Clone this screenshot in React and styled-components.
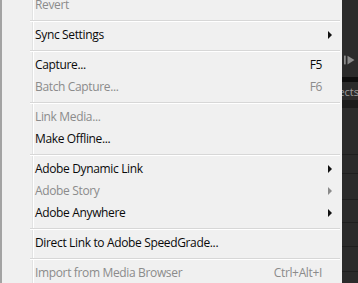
import React from "react";
import styled, { createGlobalStyle } from "styled-components";

const Global = createGlobalStyle`
  html, body { margin: 0; padding: 0; background: #2b2b2b; }
  body { font-family: "Open Sans", "Noto Sans", sans-serif; }
`;

const Page = styled.div`
  display: flex;
  width: 358px;
  height: 283px;
  overflow: hidden;
`;

const Menu = styled.div`
  flex: 0 0 342px;
  margin-top: -6px;
  display: flex;
  flex-direction: column;
  background:
    linear-gradient(to right, transparent 30px, #e2e3e3 30px, #e2e3e3 31px, #ffffff 31px, #ffffff 32px, transparent 32px),
    #f0f0f0;
  border-left: 2px solid #a3a3a3;
  box-sizing: border-box;
  font-size: 12px;
  letter-spacing: -0.35px;
`;

const Item = styled.div`
  display: flex;
  align-items: center;
  height: 22px;
  flex: 0 0 22px;
  padding-left: 33px;
  color: ${(p) => (p.$disabled ? "#8b8b8b" : "#0a0a0a")};
`;

const Label = styled.span`
  flex: 1;
  white-space: nowrap;
  line-height: 14px;
`;

const Shortcut = styled.span`
  white-space: nowrap;
  line-height: 14px;
`;

const ArrowCell = styled.span`
  flex: 0 0 20px;
  display: flex;
  align-items: center;
  padding-left: 6px;
  box-sizing: border-box;
`;

const Separator = styled.div`
  flex: 0 0 8px;
  margin-left: 28px;
  display: flex;
  align-items: center;
  &::after {
    content: "";
    flex: 1;
    height: 1px;
    background: #d7d7d7;
    box-shadow: 0 1px 0 #ffffff;
    margin-right: 2px;
  }
`;

const DarkStrip = styled.div`
  flex: 1;
  min-width: 0;
  display: flex;
  flex-direction: column;
  background: #2b2b2b;
  color: #9a9a9a;
  font-size: 12px;
  overflow: hidden;
`;

const Gap = styled.div`
  flex: 0 0 ${(p) => p.$h}px;
  background: ${(p) => p.$bg || "transparent"};
`;

const IconRow = styled.div`
  flex: 0 0 14px;
  display: flex;
  align-items: center;
  padding-left: 2px;
`;

const Tab = styled.div`
  flex: 0 0 18px;
  display: flex;
  align-items: center;
  justify-content: flex-end;
  white-space: nowrap;
  font-size: 11px;
  color: #9c9c9c;
  margin-right: -1px;
`;

const Row = styled.div`
  flex: 0 0 ${(p) => p.$h}px;
  border-bottom: 1px solid #1f1f1f;
  box-sizing: border-box;
`;

const Arrow = ({ disabled }) => (
  <svg width="5" height="8" viewBox="0 0 5 8">
    <path d="M0 0 L4 4 L0 8 Z" fill={disabled ? "#8b8b8b" : "#111"} />
  </svg>
);

const items = [
  { label: "Revert", disabled: true },
  "sep",
  { label: "Sync Settings", sub: true },
  "sep",
  { label: "Capture...", shortcut: "F5" },
  { label: "Batch Capture...", shortcut: "F6", disabled: true },
  "sep",
  { label: "Link Media...", disabled: true },
  { label: "Make Offline..." },
  "sep",
  { label: "Adobe Dynamic Link", sub: true },
  { label: "Adobe Story", sub: true, disabled: true },
  { label: "Adobe Anywhere", sub: true },
  "sep",
  { label: "Direct Link to Adobe SpeedGrade..." },
  "sep",
  { label: "Import from Media Browser", shortcut: "Ctrl+Alt+I", disabled: true },
];

export default function App() {
  return (
    <>
      <Global />
      <Page>
        <Menu>
          {items.map((it, i) =>
            it === "sep" ? (
              <Separator key={i} />
            ) : (
              <Item key={i} $disabled={it.disabled}>
                <Label>{it.label}</Label>
                {it.shortcut && <Shortcut>{it.shortcut}</Shortcut>}
                <ArrowCell>{it.sub && <Arrow disabled={it.disabled} />}</ArrowCell>
              </Item>
            )
          )}
        </Menu>
        <DarkStrip>
          <Gap $h={53} />
          <IconRow>
            <svg width="16" height="10" viewBox="0 0 16 10">
              <rect x="0" y="0" width="2" height="10" fill="#8a8a8a" />
              <path d="M4 0 L12 5 L4 10 Z" fill="#8a8a8a" />
            </svg>
          </IconRow>
          <Gap $h={10} />
          <Gap $h={5} $bg="#0e0e0e" />
          <Tab>Effects</Tab>
          <Gap $h={8} $bg="#1b1b1b" />
          <Row $h={47} />
          <Row $h={19} />
          <Row $h={26} />
          <Row $h={23} />
          <Row $h={24} />
          <Row $h={25} />
        </DarkStrip>
      </Page>
    </>
  );
}
